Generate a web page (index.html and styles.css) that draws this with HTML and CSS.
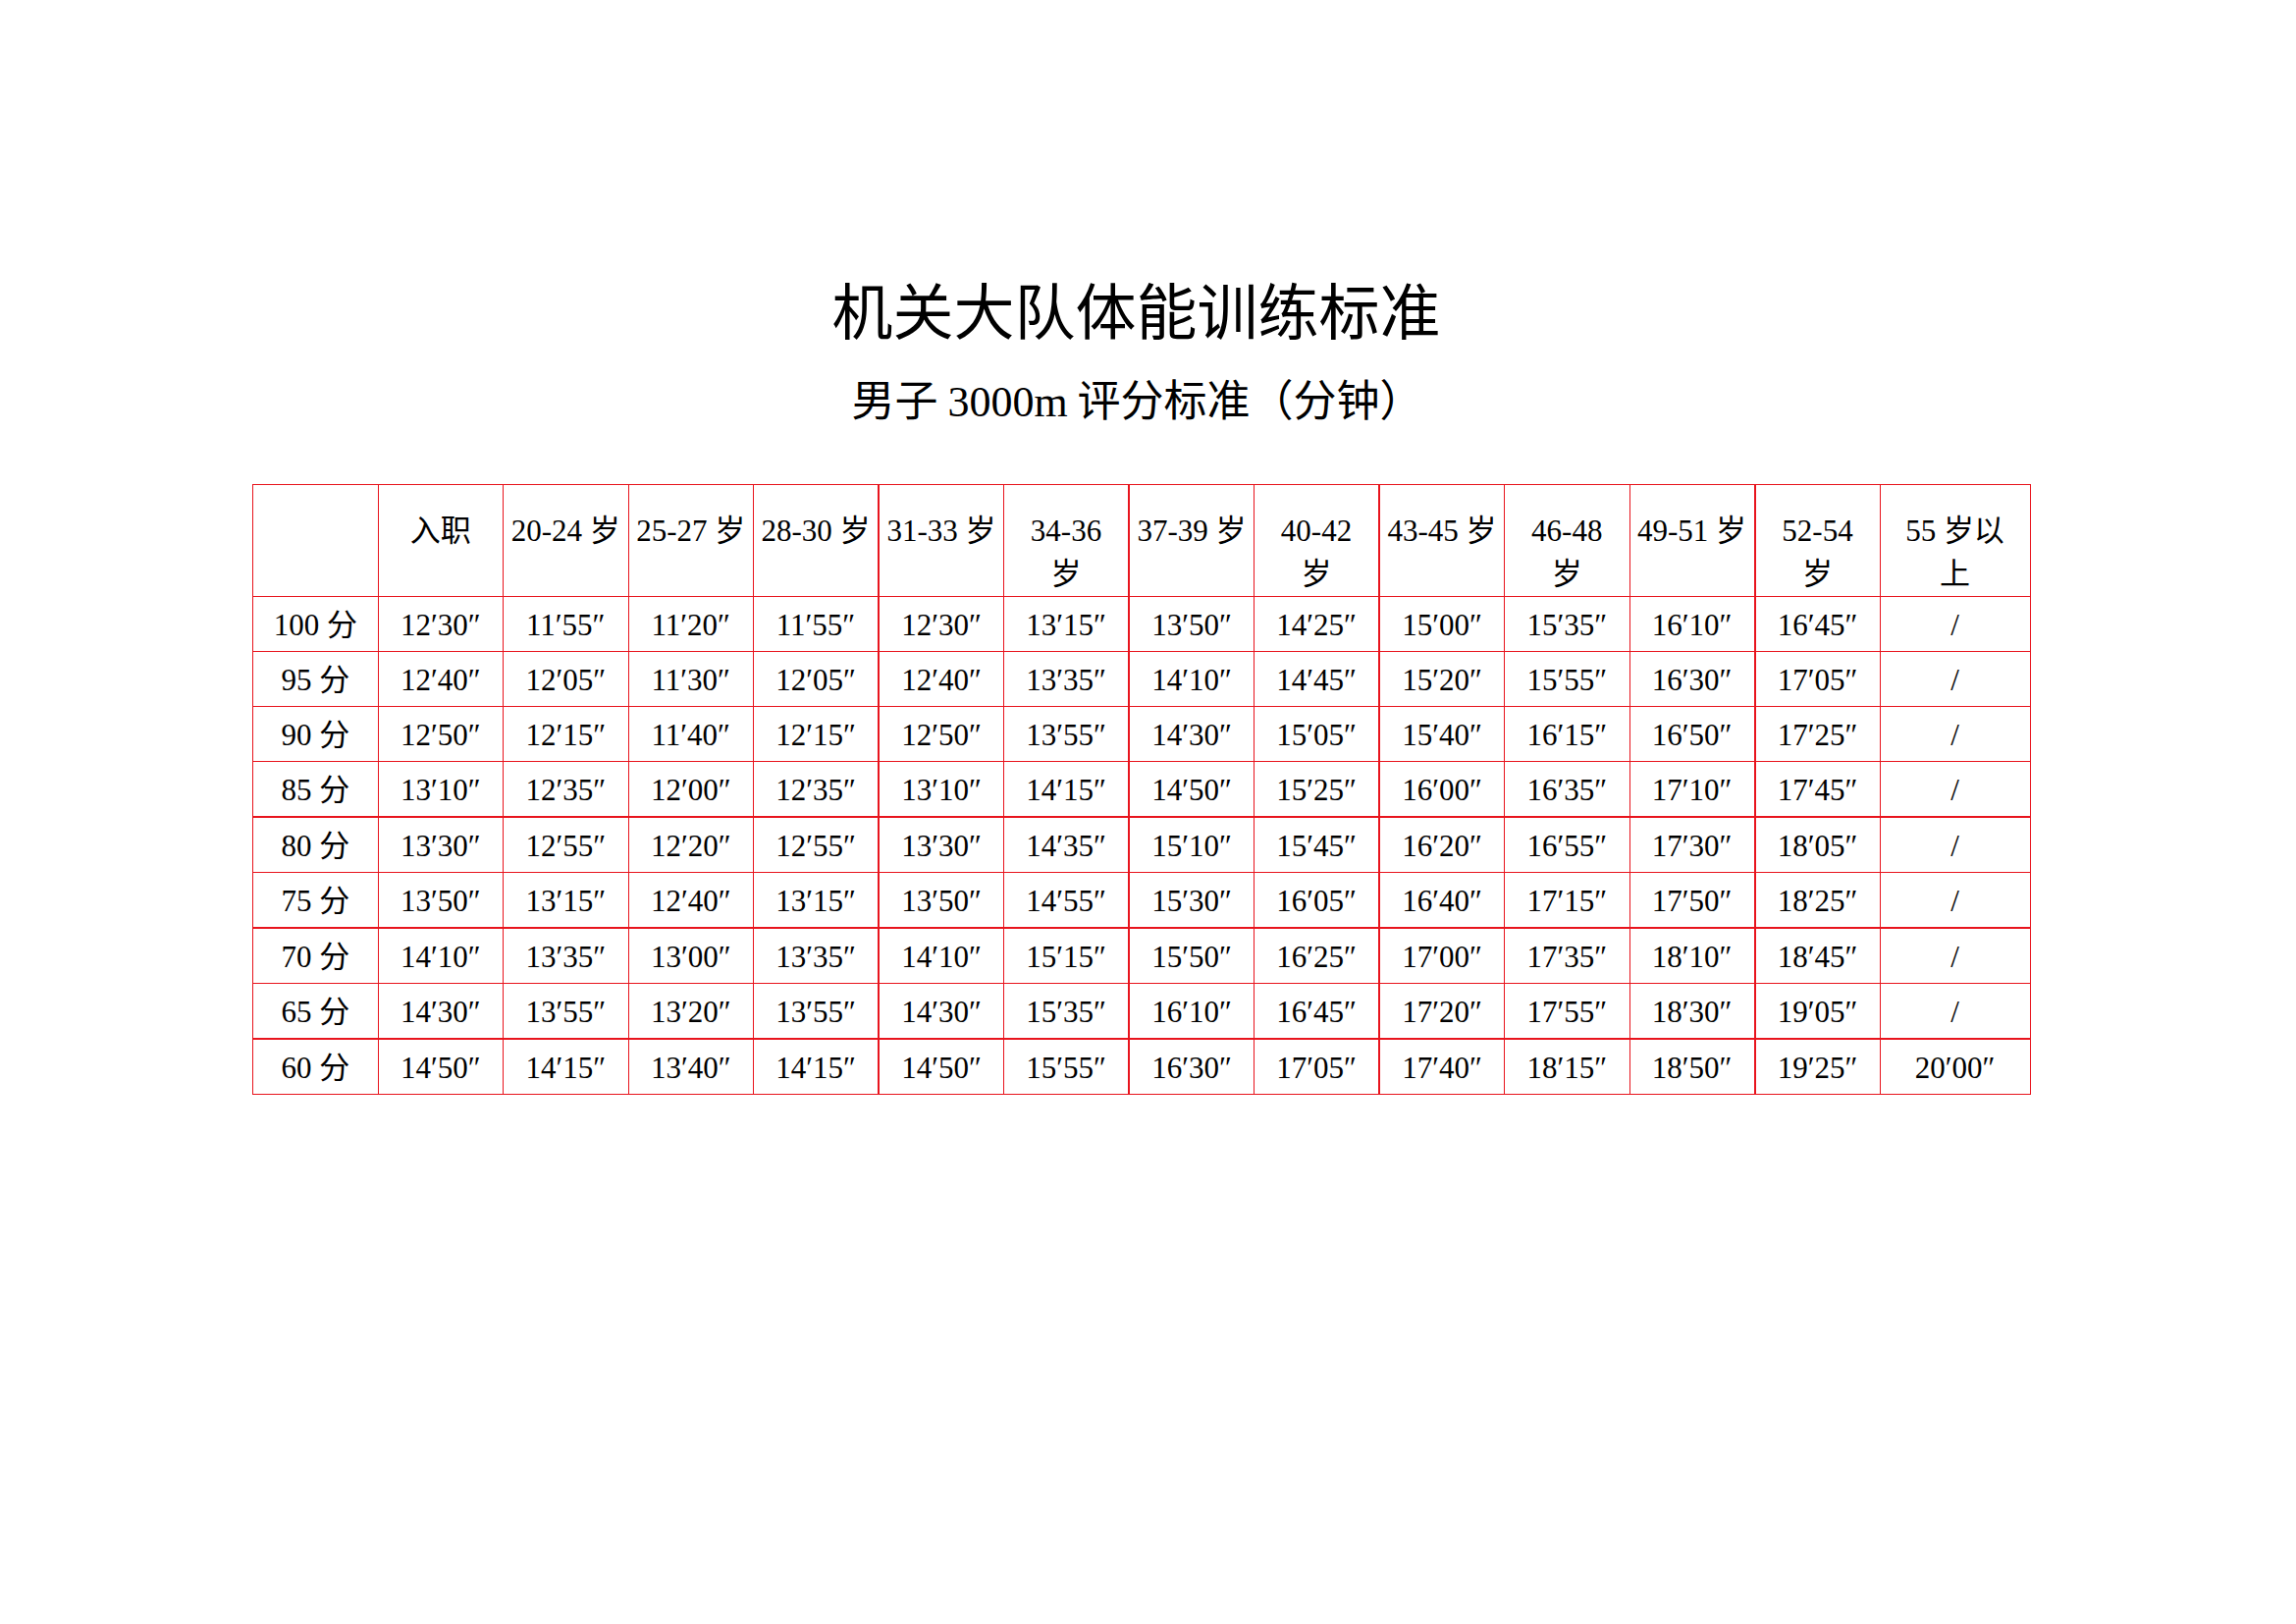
FILE: index.html
```html
<!DOCTYPE html>
<html lang="zh-CN">
<head>
<meta charset="utf-8">
<title>机关大队体能训练标准</title>
<link rel="stylesheet" href="styles.css">
</head>
<body>
<div class="page">
  <h1 class="title">机关大队体能训练标准</h1>
  <h2 class="subtitle">男子 <span class="latin">3000m</span> 评分标准（分钟）</h2>
  <div class="table-wrap">
    <table class="grid">
      <colgroup>
        <col class="c"><col class="c"><col class="c"><col class="c"><col class="c"><col class="c"><col class="c"><col class="c"><col class="c"><col class="c"><col class="c"><col class="c"><col class="c"><col class="c-last">
      </colgroup>
      <thead>
        <tr class="head">
          <th></th>
          <th>入职</th>
          <th>20-24 岁</th>
          <th>25-27 岁</th>
          <th>28-30 岁</th>
          <th class="vl">31-33 岁</th>
          <th>34-36<br>岁</th>
          <th class="vl">37-39 岁</th>
          <th>40-42<br>岁</th>
          <th class="vl">43-45 岁</th>
          <th>46-48<br>岁</th>
          <th>49-51 岁</th>
          <th class="vl">52-54<br>岁</th>
          <th>55 岁以<br>上</th>
        </tr>
      </thead>
      <tbody>
        <tr><td>100 分</td><td>12′30″</td><td>11′55″</td><td>11′20″</td><td>11′55″</td><td class="vl">12′30″</td><td>13′15″</td><td class="vl">13′50″</td><td>14′25″</td><td class="vl">15′00″</td><td>15′35″</td><td>16′10″</td><td class="vl">16′45″</td><td>/</td></tr>
        <tr><td>95 分</td><td>12′40″</td><td>12′05″</td><td>11′30″</td><td>12′05″</td><td class="vl">12′40″</td><td>13′35″</td><td class="vl">14′10″</td><td>14′45″</td><td class="vl">15′20″</td><td>15′55″</td><td>16′30″</td><td class="vl">17′05″</td><td>/</td></tr>
        <tr><td>90 分</td><td>12′50″</td><td>12′15″</td><td>11′40″</td><td>12′15″</td><td class="vl">12′50″</td><td>13′55″</td><td class="vl">14′30″</td><td>15′05″</td><td class="vl">15′40″</td><td>16′15″</td><td>16′50″</td><td class="vl">17′25″</td><td>/</td></tr>
        <tr><td>85 分</td><td>13′10″</td><td>12′35″</td><td>12′00″</td><td>12′35″</td><td class="vl">13′10″</td><td>14′15″</td><td class="vl">14′50″</td><td>15′25″</td><td class="vl">16′00″</td><td>16′35″</td><td>17′10″</td><td class="vl">17′45″</td><td>/</td></tr>
        <tr class="hl"><td>80 分</td><td>13′30″</td><td>12′55″</td><td>12′20″</td><td>12′55″</td><td class="vl">13′30″</td><td>14′35″</td><td class="vl">15′10″</td><td>15′45″</td><td class="vl">16′20″</td><td>16′55″</td><td>17′30″</td><td class="vl">18′05″</td><td>/</td></tr>
        <tr><td>75 分</td><td>13′50″</td><td>13′15″</td><td>12′40″</td><td>13′15″</td><td class="vl">13′50″</td><td>14′55″</td><td class="vl">15′30″</td><td>16′05″</td><td class="vl">16′40″</td><td>17′15″</td><td>17′50″</td><td class="vl">18′25″</td><td>/</td></tr>
        <tr class="hl"><td>70 分</td><td>14′10″</td><td>13′35″</td><td>13′00″</td><td>13′35″</td><td class="vl">14′10″</td><td>15′15″</td><td class="vl">15′50″</td><td>16′25″</td><td class="vl">17′00″</td><td>17′35″</td><td>18′10″</td><td class="vl">18′45″</td><td>/</td></tr>
        <tr><td>65 分</td><td>14′30″</td><td>13′55″</td><td>13′20″</td><td>13′55″</td><td class="vl">14′30″</td><td>15′35″</td><td class="vl">16′10″</td><td>16′45″</td><td class="vl">17′20″</td><td>17′55″</td><td>18′30″</td><td class="vl">19′05″</td><td>/</td></tr>
        <tr class="hl"><td>60 分</td><td>14′50″</td><td>14′15″</td><td>13′40″</td><td>14′15″</td><td class="vl">14′50″</td><td>15′55″</td><td class="vl">16′30″</td><td>17′05″</td><td class="vl">17′40″</td><td>18′15″</td><td>18′50″</td><td class="vl">19′25″</td><td>20′00″</td></tr>
      </tbody>
    </table>
  </div>
</div>
</body>
</html>
```

FILE: styles.css
```css
html, body {
  margin: 0;
  padding: 0;
  background: #ffffff;
}

.page {
  width: 2339px;
  min-height: 1654px;
  padding-top: 274px;
  box-sizing: border-box;
  color: #000000;
}

.title {
  margin: 0;
  text-align: center;
  font-family: "Noto Sans CJK SC", "Noto Sans", sans-serif;
  font-weight: 400;
  font-size: 62px;
  line-height: 80px;
  letter-spacing: 0;
  padding-right: 24px;
}

.subtitle {
  margin: 23px 0 0 0;
  text-align: center;
  font-family: "Noto Sans CJK SC", "Noto Sans", sans-serif;
  font-weight: 400;
  font-size: 44px;
  line-height: 56px;
  padding-right: 22px;
}

.subtitle .latin {
  font-family: "Liberation Serif", serif;
}

.table-wrap {
  margin-top: 55px;
  padding-left: 257px;
}

.grid {
  border-collapse: collapse;
  table-layout: fixed;
  width: 1811px;
  font-family: "Liberation Serif", "Noto Sans CJK SC", serif;
  font-size: 31px;
  color: #000000;
}

.grid col.c {
  width: 127.5px;
}

.grid col.c-last {
  width: 153px;
}

.grid th,
.grid td {
  border: 1px solid #e8141d;
  padding: 0 2px;
  text-align: center;
  font-weight: 400;
  white-space: nowrap;
}

.grid tr.head th {
  height: 114px;
  box-sizing: border-box;
  vertical-align: top;
  padding-top: 25px;
  line-height: 44px;
}

.grid tbody td {
  height: 53px;
  vertical-align: middle;
  line-height: 34px;
  padding-top: 2px;
}

.grid .vl {
  border-left: 2px solid #e8141d;
}

.grid tr.hl td {
  border-top: 2px solid #e8141d;
}
```
